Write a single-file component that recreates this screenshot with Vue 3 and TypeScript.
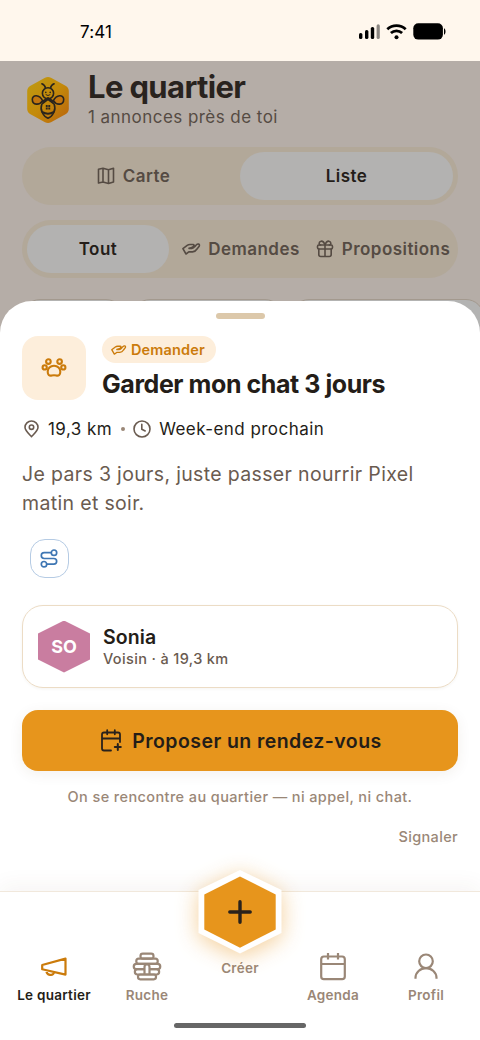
<script setup lang="ts">
interface Tab {
  id: string
  label: string
}

const viewTabs: Tab[] = [
  { id: 'map', label: 'Carte' },
  { id: 'list', label: 'Liste' },
]
const kindTabs: Tab[] = [
  { id: 'all', label: 'Tout' },
  { id: 'ask', label: 'Demandes' },
  { id: 'offer', label: 'Propositions' },
]
const navItems: Tab[] = [
  { id: 'area', label: 'Le quartier' },
  { id: 'hive', label: 'Ruche' },
  { id: 'create', label: 'Créer' },
  { id: 'agenda', label: 'Agenda' },
  { id: 'profile', label: 'Profil' },
]
const handPath =
  'M.9 5.600L5.200 2.300Q6.300 1.500 8 1.500H11Q12.700 1.700 11.700 3.100L10.800 4Q9.500 4.800 7 5.400H9.800Q11.500 5.400 12.800 3.600L14.200 2Q15.400 .8 16.600 1.100Q17.900 1.600 17.200 3.200L15 6Q13.400 8.600 10.500 8.900H6.800L4 11Z'
</script>

<template>
  <div class="phone">
    <div class="status">
      <span class="time">7:41</span>
      <svg class="signals" width="90" height="18" viewBox="0 0 90 18">
        <rect x="1" y="10" width="3.4" height="6" rx="1.6" />
        <rect x="7" y="7" width="3.4" height="9" rx="1.6" />
        <rect x="12.800" y="4" width="3.4" height="12" rx="1.6" />
        <rect x="18.600" y="1.3" width="3.2" height="14.700" rx="1.6" fill="#8b8681" />
        <g fill="none" stroke="#000" stroke-width="2.700">
          <path d="M29.300 6.200a13.400 13.400 0 0 1 18.400 0" />
          <path d="M32.900 10.100a8.200 8.200 0 0 1 11.200 0" />
        </g>
        <circle cx="38.500" cy="14.200" r="2" />
        <rect x="55.300" y="0.200" width="29.600" height="16.400" rx="5" />
        <path d="M86 5.200c2 .6 2 5.900 0 6.500z" />
      </svg>
    </div>

    <div class="page">
      <header class="head">
        <svg class="logo" width="42" height="48" viewBox="0 0 42 48">
          <defs>
            <linearGradient id="honey" x1="0" y1="0" x2="1" y2="1">
              <stop offset="0" stop-color="#bd9b12" />
              <stop offset=".5" stop-color="#c48a0a" />
              <stop offset="1" stop-color="#b9630d" />
            </linearGradient>
          </defs>
          <path d="M18 1.700Q21 .2 24 1.700L38.500 9.700Q41.800 11.500 41.800 15V33Q41.800 36.300 38.500 38.200L24 46.200Q21 47.800 18 46.200L3.500 38.200Q.2 36.300 .2 33V15Q.2 11.500 3.500 9.700Z" fill="url(#honey)" />
          <path d="M15.700 24.800C12.500 18 5.300 18.500 5.300 23.200C5.300 29.500 12.500 29.500 15.700 24.800ZM26.300 24.800C29.500 18 36.700 18.500 36.700 23.200C36.700 29.500 29.500 29.500 26.300 24.800Z" fill="#c2750f" />
          <g fill="none" stroke="#2a241d" stroke-width="1.600" stroke-linecap="round" stroke-linejoin="round">
            <circle cx="21" cy="17.300" r="5.600" />
            <path d="M18.500 12.200Q18 9 14.900 7.800M23.500 12.200Q24 9 27.100 7.800" />
            <path d="M19 18.800q2 1.700 4 0" stroke-width="1" />
            <path d="M15.700 24.800C12.500 18 5.300 18.500 5.300 23.200C5.300 29.500 12.500 29.500 15.700 24.800ZM26.300 24.800C29.500 18 36.700 18.500 36.700 23.200C36.700 29.500 29.500 29.500 26.300 24.800Z" />
            <path d="M21 23.300L27.200 28.200C29.500 34 25.500 40.500 21 42.200C16.500 40.500 12.500 34 14.800 28.200Z" />
            <path d="M16 25.500L21 22.200L26 25.500" stroke-width="2.400" />
            <path d="M15.500 36.200Q21 39.500 26.500 36.200" stroke-width="2" />
          </g>
          <g fill="#2a241d">
            <circle cx="18.800" cy="16.400" r=".8" />
            <circle cx="23.200" cy="16.400" r=".8" />
            <path d="M18.800 29h1.900v1.900h-1.900zM21.300 29h1.900v1.900h-1.900zM18.800 31.500h1.900v1.900h-1.900zM21.300 31.500h1.900v1.900h-1.900z" />
          </g>
        </svg>
        <div>
          <h1>Le quartier</h1>
          <p class="count">1 annonces près de toi</p>
        </div>
      </header>

      <div class="segment two">
        <div v-for="t in viewTabs" :key="t.id" class="seg" :class="{ on: t.id === 'list' }">
          <svg v-if="t.id === 'map'" class="line" width="18" height="18" viewBox="0 0 18 18">
            <path d="M1.500 2.300L6 1.200L11.500 2.700L16.500 1.200V15L11.500 16.500L6 15L1.500 16Z M6 1.200V15 M11.500 2.700V16.500" />
          </svg>
          <span>{{ t.label }}</span>
        </div>
      </div>

      <div class="segment three">
        <div v-for="t in kindTabs" :key="t.id" class="seg" :class="{ on: t.id === 'all' }">
          <svg v-if="t.id === 'ask'" class="line" width="18" height="12" viewBox="0 0 18 12">
            <path :d="handPath" />
          </svg>
          <svg v-if="t.id === 'offer'" class="line" width="18" height="18" viewBox="0 0 18 18">
            <rect x="1.500" y="5" width="15" height="4" rx="1.400" />
            <path d="M2.800 9V14.500Q2.800 16.500 4.800 16.500H13.200Q15.200 16.500 15.200 14.500V9M9 5V16.500M9 5C8 2 6.500 1 5 1.200C2.500 1.600 2.700 5 4.700 5M9 5C10 2 11.500 1 13 1.200C15.500 1.600 15.300 5 13.300 5" />
          </svg>
          <span>{{ t.label }}</span>
        </div>
      </div>

      <div class="chips">
        <i class="chip c1"></i><i class="chip c2"></i><i class="chip c3"></i>
      </div>
    </div>

    <section class="sheet">
      <div class="grab"></div>
      <div class="intro">
        <div class="tile">
          <svg width="26" height="24" viewBox="0 0 26 24" fill="none" stroke="#cb7b0b" stroke-width="2.100">
            <circle cx="7.400" cy="5.600" r="2.300" />
            <circle cx="18.600" cy="5.600" r="2.300" />
            <circle cx="3.700" cy="11.400" r="2.100" />
            <circle cx="22.300" cy="11.400" r="2.100" />
            <path d="M13 9.700C16.800 9.700 19.300 12.500 19.300 15.800C19.300 18.900 17.700 19.900 15.600 19.600Q13 18.800 10.400 19.600C8.300 19.900 6.700 18.900 6.700 15.800C6.700 12.500 9.200 9.700 13 9.700Z" />
          </svg>
        </div>
        <div>
          <span class="kind">
            <svg class="line" width="15" height="10" viewBox="0 0 18 12">
              <path :d="handPath" />
            </svg>
            <span>Demander</span>
          </span>
          <h2>Garder mon chat 3 jours</h2>
        </div>
      </div>

      <div class="meta">
        <svg class="line" width="17" height="18" viewBox="0 0 17 18">
          <path d="M9.500 16.700C7.500 14.500 3 10.800 3 7.300A6.500 6.300 0 0 1 16 7.300C16 10.800 11.500 14.500 9.500 16.700Z" />
          <circle cx="9.500" cy="7.200" r="2.200" />
        </svg>
        <span class="dist">19,3 km</span>
        <i class="dot"></i>
        <svg class="line clock" width="18" height="18" viewBox="0 0 18 18">
          <circle cx="9" cy="9" r="8" />
          <path d="M8.800 4.300V9.300L12.200 11" />
        </svg>
        <span class="when">Week-end prochain</span>
      </div>

      <p class="desc">Je pars 3 jours, juste passer nourrir Pixel<br />matin et soir.</p>

      <div class="route">
        <svg width="18" height="19" viewBox="0 0 18 19" fill="none" stroke="#3e76b3" stroke-width="1.700">
          <circle cx="14" cy="3.700" r="2.700" />
          <circle cx="4" cy="15.200" r="2.700" />
          <path d="M11.300 3.700H4.200A2.900 2.900 0 0 0 4.200 9.500H13.800A2.850 2.850 0 0 1 13.800 15.200H6.700" />
        </svg>
      </div>

      <div class="person">
        <div class="avatar">SO</div>
        <div>
          <div class="name">Sonia</div>
          <div class="sub">Voisin · à 19,3 km</div>
        </div>
      </div>

      <div class="cta">
        <svg width="22" height="23" viewBox="0 0 22 23" fill="none" stroke="#29221c" stroke-width="1.800" stroke-linecap="round">
          <path d="M11 21.500H4Q2 21.500 2 19.500V5.500Q2 3.500 4 3.500H18Q20 3.500 20 5.500V13M2 9.500H20M7.200 1.200V5.300M14.800 1.200V5.300" />
          <path d="M17.800 15V21M14.800 18H20.800" stroke-width="2" />
        </svg>
        <span>Proposer un rendez-vous</span>
      </div>
      <p class="note">On se rencontre au quartier — ni appel, ni chat.</p>
      <div class="report">Signaler</div>
    </section>

    <nav class="nav">
      <div v-for="n in navItems" :key="n.id" class="item" :class="n.id">
        <svg v-if="n.id === 'area'" width="30" height="30" viewBox="0 0 30 30">
          <path d="M3.200 13L26.500 6.600V22.600L3.200 17.300ZM7.400 18.600C7.600 23.700 14.200 24.200 14.900 20.400" />
        </svg>
        <svg v-else-if="n.id === 'hive'" width="30" height="30" viewBox="0 0 30 30">
          <rect x="8.500" y="1.700" width="13" height="5" rx="2.300" />
          <rect x="4.300" y="6.700" width="21.400" height="5.200" rx="2.400" />
          <path d="M12.500 17.200H4.400A2.600 2.600 0 0 1 4.400 11.900H25.600A2.600 2.600 0 0 1 25.600 17.200H17.500" />
          <path d="M12.500 17.200H5.500A2.500 2.500 0 0 0 5.500 22.500H24.500A2.500 2.500 0 0 0 24.500 17.200H17.500" />
          <path d="M12.500 22.500V15A2.500 2.500 0 0 1 17.500 15V22.500" />
          <rect x="6" y="22.500" width="18" height="4.800" rx="2.200" />
        </svg>
        <div v-else-if="n.id === 'create'" class="fab">
          <svg width="136" height="120" viewBox="0 0 136 120">
            <path class="rim" d="M68 18L109.500 38V81L68 101.500L26.500 81V38Z" />
            <path d="M68 24.500L103.700 42.500V77.500L68 95.700L32.300 77.500V42.500Z" fill="#e7951c" />
            <path d="M68 49.800V70.200M57.800 60H78.200" stroke="#29221c" stroke-width="3.400" stroke-linecap="round" />
          </svg>
        </div>
        <svg v-else-if="n.id === 'agenda'" width="30" height="30" viewBox="0 0 30 30">
          <rect x="3.200" y="4.500" width="23.600" height="22.600" rx="2.700" />
          <path d="M3 12H27M10 1V7.500M20 1V7.500" />
        </svg>
        <svg v-else width="30" height="30" viewBox="0 0 30 30">
          <circle cx="15" cy="9.300" r="6.800" />
          <path d="M4.500 26.700V25.800A10.500 9.700 0 0 1 25.500 25.800V26.700" />
        </svg>
        <span>{{ n.label }}</span>
      </div>
    </nav>
    <div class="home"></div>
  </div>
</template>

<style>
html,
body {
  margin: 0;
  background: #fff;
}
</style>

<style scoped>
.phone {
  position: relative;
  width: 480px;
  height: 1040px;
  overflow: hidden;
  font-family: Inter, 'Liberation Sans', sans-serif;
  color: #241d18;
  background: #fff;
  white-space: nowrap;
}
h1, h2, p { margin: 0; }
svg { display: block; flex: none; overflow: visible; }
.line {
  fill: none;
  stroke: currentColor;
  stroke-width: 1.6;
  stroke-linecap: round;
  stroke-linejoin: round;
}

.status {
  height: 61px;
  box-sizing: border-box;
  padding: 23px 32px 0 80px;
  display: flex;
  justify-content: space-between;
  background: #fff7ed;
}
.time { font-size: 17px; line-height: 18px; letter-spacing: 0.1px; color: #000; }

.page {
  height: 300px;
  box-sizing: border-box;
  padding: 0 22px;
  background: #b5ada7;
  color: #554b43;
}
.head { display: flex; height: 86px; box-sizing: border-box; padding: 15px 0 0 5px; gap: 19px; }
h1 { margin-top: -7px; font-size: 31px; line-height: 36px; font-weight: 700; letter-spacing: -0.63px; color: #29231e; }
.count { margin-top: 1px; font-size: 17px; line-height: 22px; letter-spacing: 0.45px; }

.segment {
  height: 58px;
  box-sizing: border-box;
  padding: 5px;
  display: grid;
  border-radius: 29px;
  background: #b2a899;
  font-size: 17px;
  font-weight: 600;
  letter-spacing: 0.46px;
}
.two { grid-template-columns: 1fr 1fr; }
.three { margin-top: 15px; grid-template-columns: 142px 142px 1fr; }
.seg { display: flex; align-items: center; justify-content: center; gap: 8px; border-radius: 25px; }
.three .seg:not(.on) { margin-right: -2px; }
.on { background: #b3b2b1; color: #241d19; }

.chips { display: flex; margin-top: 21px; gap: 8px; }
.chip { flex: none; box-sizing: border-box; height: 44px; border: 1px solid #a3998e; border-radius: 18px; background: #b3b3b2; }
.c1 { width: 102px; }
.c2 { width: 151px; }
.c3 { width: 193px; }

.sheet {
  position: absolute;
  top: 301px;
  left: 0;
  right: 0;
  height: 590px;
  box-sizing: border-box;
  padding: 12px 22px 0;
  border-radius: 32px 32px 0 0;
  background: #fff;
}
.grab { width: 49px; height: 6px; margin: 0 auto; border-radius: 3px; background: #dcc8aa; }
.intro { display: flex; gap: 16px; margin-top: 17px; height: 64px; }
.tile {
  width: 64px;
  height: 64px;
  display: grid;
  place-items: center;
  border-radius: 16px;
  background: #fdeedb;
}
.kind {
  display: flex;
  align-items: center;
  gap: 5px;
  width: 114px;
  height: 27px;
  box-sizing: border-box;
  padding-left: 9px;
  border-radius: 14px;
  background: #fdeedb;
  color: #cb7b0b;
  font-size: 14.5px;
  font-weight: 600;
  letter-spacing: 0.15px;
}
h2 { margin-top: 6px; font-size: 25px; line-height: 30px; font-weight: 700; letter-spacing: -0.43px; }

.meta { display: flex; align-items: center; height: 24px; margin-top: 17px; color: #6a5b50; font-size: 17px; }
.meta span { color: #241d18; letter-spacing: 0.45px; }
.dist { margin-left: 9px; }
.dot { width: 4px; height: 4px; margin: 0 8.5px; border-radius: 50%; background: #9a8777; }
.when { margin-left: 8px; }

.desc { margin-top: 19px; font-size: 19.5px; line-height: 29px; letter-spacing: 0.34px; color: #6a5b50; }
.route {
  width: 39px;
  height: 39px;
  margin: 21px 0 0 7.5px;
  box-sizing: border-box;
  display: grid;
  place-items: center;
  border: 1px solid #b5cbe4;
  border-radius: 15px;
}
.person {
  height: 83px;
  margin-top: 27px;
  box-sizing: border-box;
  padding-left: 15px;
  display: flex;
  align-items: center;
  gap: 13px;
  border: 1px solid #ecdcc5;
  border-radius: 21px;
  box-shadow: 0 1px 3px rgba(90, 60, 30, 0.06);
}
.avatar {
  width: 52px;
  height: 52px;
  display: grid;
  place-items: center;
  clip-path: polygon(50% 0, 100% 25%, 100% 75%, 50% 100%, 0 75%, 0 25%);
  background: #c97da0;
  color: #fff;
  font-size: 18px;
  font-weight: 700;
}
.name { font-size: 19.5px; line-height: 24px; font-weight: 600; letter-spacing: 0.1px; }
.sub { font-size: 14.5px; line-height: 20px; font-weight: 500; letter-spacing: 0.36px; color: #6a5b50; }
.cta {
  height: 61px;
  margin-top: 22px;
  box-sizing: border-box;
  padding-left: 2px;
  display: flex;
  align-items: center;
  justify-content: center;
  gap: 10px;
  border-radius: 16px;
  background: #e7951c;
  font-size: 19.5px;
  font-weight: 600;
  letter-spacing: 0.44px;
  box-shadow: 0 3px 14px rgba(90, 60, 30, 0.08);
}
.note { margin-top: 16px; text-align: center; font-size: 14.5px; line-height: 20px; font-weight: 500; letter-spacing: 0.39px; color: #9a8777; }
.report { margin-top: 20px; text-align: right; font-size: 14.5px; line-height: 20px; font-weight: 500; letter-spacing: 0.35px; color: #9a8777; }

.nav {
  position: absolute;
  top: 891px;
  left: 0;
  right: 0;
  height: 149px;
  box-sizing: border-box;
  padding: 60px 7.5px 0;
  display: grid;
  grid-template-columns: repeat(5, minmax(0, 1fr));
  border-top: 1px solid #f1e8dc;
  background: #fff;
  color: #9a8777;
  box-shadow: 0 -6px 20px rgba(90, 60, 30, 0.05);
}
.item { display: flex; flex-direction: column; align-items: center; font-size: 13.5px; font-weight: 600; letter-spacing: 0.27px; }
.item > svg { fill: none; stroke: currentColor; stroke-width: 2.2; stroke-linejoin: round; }
.item > span { margin-top: 3px; line-height: 20px; }
.area > svg { stroke: #cb7b0b; }
.area > span { color: #241d18; }
.fab { height: 3px; width: 136px; position: relative; }
.fab svg { position: absolute; left: 0; top: -100px; }
.rim { fill: #fff; filter: drop-shadow(0 4px 11px rgba(231, 149, 28, 0.45)); }
.home {
  position: absolute;
  left: 174px;
  top: 1023px;
  width: 132px;
  height: 5px;
  border-radius: 3px;
  background: #666;
}
</style>
